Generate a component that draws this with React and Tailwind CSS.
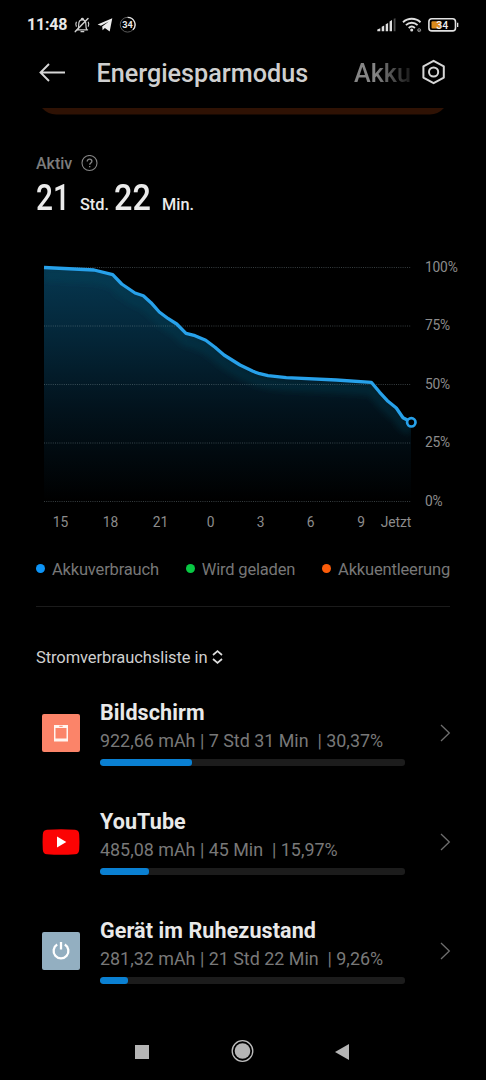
const GRID = [
  { label: "100%", y: 17.5 },
  { label: "75%", y: 76 },
  { label: "50%", y: 134.5 },
  { label: "25%", y: 193 },
  { label: "0%", y: 251.5 },
];

const HOURS = [
  { label: "15", x: 60.5 },
  { label: "18", x: 110.5 },
  { label: "21", x: 160.5 },
  { label: "0", x: 210.5 },
  { label: "3", x: 260.5 },
  { label: "6", x: 310.5 },
  { label: "9", x: 361 },
  { label: "Jetzt", x: 396 },
];

const LINE =
  "M44 17.5 L94 20 L112.7 24.7 L121.7 34 L135 43 L143.3 45.7 L151 52.7 L159.3 62 L168.3 68.7 L176.7 74 L186 83.3 L195 85.7 L205.7 90.3 L215 97.3 L224 105 L240 115 L253 121.3 L259.7 123.7 L268 125.7 L286.3 127.7 L336.3 130 L371.3 132.3 L379.7 142.3 L388 151.3 L396.3 158 L403 167.7 L411 172";

const StatusBar = () => (
  <div className="flex h-12 items-center justify-between pt-[2px] pl-[27px] pr-[26px]">
    <div className="flex items-center">
      <span className="w-[47px] text-[16px] font-bold tracking-[-0.2px] whitespace-nowrap text-[#e8e8e8]">11:48</span>
      <svg className="h-4 w-4" viewBox="0 0 16 16" fill="none" stroke="#cfcfcf" strokeWidth="1.2" strokeLinecap="round">
        <path d="M3 12.800h10.600M4 12.400c.6-1.200.7-2.400.7-4.700 0-2.800 1.200-4.800 3.600-4.800s3.600 2 3.600 4.800c0 2.300.1 3.500.8 4.900M7.300 2.300c.2-1.300 1.900-1.300 2.100 0M7 14.700h2.800" />
        <path d="M2.300 5.200c-.6 1.200-.6 2.800 0 4M14.300 5.200c.6 1.200.6 2.800 0 4" />
        <path d="M14 1.500L1.300 14.600" strokeWidth="1.500" />
      </svg>
      <svg className="ml-[7px] h-[14px] w-4" viewBox="0 0 16 14">
        <path d="M.6 6.500L15.300.3 12.700 13.600 7.900 10.100 5.600 12.300 5.200 8.400 11.800 3.600 3.900 7.800z" fill="#ececec" />
      </svg>
      <svg className="ml-[6px] h-[18px] w-[18px]" viewBox="0 0 18 18" fill="none">
        <circle cx="8.600" cy="8.700" r="7.400" stroke="#5a5a5a" strokeWidth="1" />
        <path d="M8.600 1.300A7.400 7.400 0 0 1 13.900 13.900" stroke="#e2e2e2" strokeWidth="1.300" />
        <text x="8.600" y="12" textAnchor="middle" fontSize="9.200" fontWeight="700" fill="#e8e8e8">34</text>
      </svg>
    </div>
    <div className="flex items-center">
      <svg className="h-[14px] w-[19px]" viewBox="0 0 19 14" fill="#dedede">
        <path d="M.3 11.400l3-1.200V13.200H.3zM4.700 8.800l2.500-1.400v5.800H4.700zM8.700 6.300l2.400-1.400v8.300H8.700zM12.600 3.500l2.400-1.400v11.100h-2.400z" />
        <path d="M16.700.8l1.800-.6v13h-1.800z" fill="#4d4d4d" />
      </svg>
      <svg className="ml-[6px] h-4 w-[21px]" viewBox="0 0 21 16" fill="none" stroke="#dedede" strokeWidth="1.900">
        <path d="M1 5.200c5-4.600 12.500-4.600 17.500 0M3.900 8.100c3.400-3.100 8.300-3.100 11.700 0M6.700 10.900c1.900-1.600 4.300-1.600 6.200 0" />
        <circle cx="9.700" cy="13" r="1.500" fill="#dedede" stroke="none" />
        <circle cx="17.200" cy="13.200" r="1.500" stroke="#8a8a8a" strokeWidth="1" />
        <path d="M15.700 13.300h3" stroke="#8a8a8a" strokeWidth=".8" />
      </svg>
      <svg className="ml-[5px] h-4 w-8" viewBox="0 0 32 16" fill="none">
        <rect x="0.900" y="1.700" width="26.600" height="12.200" rx="3" stroke="#e2e2e2" strokeWidth="1.600" />
        <rect x="3.500" y="4.200" width="9" height="7.400" rx="1" fill="#d98a1c" />
        <path d="M29 5.800h1.300v4.200h-1.300z" fill="#e2e2e2" />
        <text x="14.300" y="11.500" textAnchor="middle" fontSize="10.500" fontWeight="500" fill="#efefef">34</text>
      </svg>
    </div>
  </div>
);

const Header = () => (
  <header className="flex h-[60px] items-center pb-[8px] pl-[39px]">
    <svg className="mb-[2px] h-[20px] w-[27px]" viewBox="0 0 27 20" fill="none" stroke="#d6d6d6" strokeWidth="1.900">
      <path d="M26 9.500H1.500M10 1L1.500 9.500 10 18" />
    </svg>
    <h1 className="ml-[30.500px] w-[257.500px] text-[25.200px] font-medium whitespace-nowrap text-[#cfcfcf]">Energiesparmodus</h1>
    <span className="w-[56px] overflow-hidden bg-linear-to-r from-[#858585] from-40% to-[#1c1c1c] bg-clip-text text-[25.200px] font-medium whitespace-nowrap text-transparent">
      Akku
    </span>
    <svg className="mb-[4px] ml-[11px] h-[26px] w-[26px]" viewBox="0 0 26 26" fill="none" stroke="#d6d6d6" strokeWidth="2" strokeLinejoin="round">
      <path d="M12.600 1.800L22.800 7.400V18.600L12.600 24.200 2.400 18.600V7.400z" />
      <circle cx="12.600" cy="13" r="4.600" />
    </svg>
  </header>
);

const ActiveTime = () => (
  <section className="px-9 pt-[36px]">
    <div className="flex h-6 items-center">
      <span className="w-[45px] pt-[2px] text-[16px] font-medium text-[#7c7c7c]">Aktiv</span>
      <svg className="h-[17px] w-[17px]" viewBox="0 0 17 17" fill="none" stroke="#858585" strokeWidth="1.100">
        <circle cx="8.500" cy="8" r="7.500" />
        <path d="M6.200 6.500c0-3.200 4.700-3 4.700-.2 0 1.700-2.200 1.800-2.200 3.500M8.700 10.900v1.300" strokeWidth="1.300" />
      </svg>
    </div>
    <div className="flex h-11 items-baseline whitespace-nowrap text-[#ebebeb]">
      <span className="w-[44px] origin-left scale-x-[0.83] text-[36px] leading-[46px] font-medium">21</span>
      <span className="w-[34px] text-[16.300px] font-medium">Std.</span>
      <span className="w-[48px] origin-left scale-x-[0.9] text-[36px] leading-[46px] font-medium">22</span>
      <span className="text-[16.300px] font-medium">Min.</span>
    </div>
  </section>
);

const BatteryChart = () => (
  <svg className="mt-[31px] block h-[290px] w-[486px]" viewBox="0 0 486 290" fill="none">
    <defs>
      <linearGradient id="area" x1="0" y1="17" x2="0" y2="251" gradientUnits="userSpaceOnUse">
        <stop offset="0" stopColor="#063750" />
        <stop offset="0.300" stopColor="#042638" />
        <stop offset="0.600" stopColor="#02131d" />
        <stop offset="1" stopColor="#000000" />
      </linearGradient>
      <filter id="soft" x="-10%" y="-10%" width="120%" height="130%">
        <feGaussianBlur stdDeviation="3" />
      </filter>
      <clipPath id="under">
        <path d={`${LINE} V251.500 H44z`} />
      </clipPath>
    </defs>
    <path d={`${LINE} V251.500 H44z`} fill="url(#area)" />
    <g clipPath="url(#under)">
      <path d={LINE} stroke="#0a4a5c" strokeOpacity="0.280" strokeWidth="10" transform="translate(0 8)" filter="url(#soft)" />
    </g>
    {GRID.map((g) => (
      <g key={g.label}>
        <path d={`M44 ${g.y}H411`} stroke="#8a9ba0" strokeOpacity="0.400" strokeWidth="1" strokeDasharray="1 1.200" />
        <text x="425" y={g.y + 4.300} fontSize="13.800" letterSpacing="-0.200" fill="#8c8c8c">{g.label}</text>
      </g>
    ))}
    <path d={LINE} stroke="#27a1ea" strokeWidth="3.300" strokeLinejoin="round" />
    <circle cx="411.300" cy="172.300" r="4.200" fill="#000" stroke="#27a1ea" strokeWidth="2.700" />
    {HOURS.map((h) => (
      <text key={h.label} x={h.x} y="276.500" textAnchor="middle" fontSize="13.800" letterSpacing="-0.100" fill="#8c8c8c">{h.label}</text>
    ))}
  </svg>
);

const Legend = () => (
  <div className="mx-9 flex h-[67px] items-center justify-between border-b border-[#1b1b1b] pb-[6px] text-[16.500px] tracking-[-0.180px] whitespace-nowrap text-[#777]">
    <div className="flex items-center gap-[7px]">
      <i className="mb-[4px] h-[9px] w-[9px] rounded-full bg-[#0d94f7]" />
      Akkuverbrauch
    </div>
    <div className="flex items-center gap-[7px]">
      <i className="mb-[4px] h-[9px] w-[9px] rounded-full bg-[#08c843]" />
      Wird geladen
    </div>
    <div className="flex items-center gap-[7px]">
      <i className="mb-[4px] h-[9px] w-[9px] rounded-full bg-[#fc5c0a]" />
      Akkuentleerung
    </div>
  </div>
);

const ScreenIcon = () => (
  <svg className="h-[38px] w-[38px]" viewBox="0 0 38 38">
    <rect width="38" height="38" rx="2" fill="#fb8469" />
    <path d="M12 11h14v16.500H12zM13.500 14v10.500h11V14z" fill="#fff4ef" fillRule="evenodd" />
    <path d="M17.300 12.300h3.400" stroke="#fb8469" strokeWidth="1" />
  </svg>
);

const YouTubeIcon = () => (
  <svg className="h-[38px] w-[38px]" viewBox="0 0 38 38">
    <path d="M5 6.700Q19 5.600 33 6.700Q37 7 37.200 11.500Q37.700 19 37.200 26.500Q37 31 33 31.300Q19 32.400 5 31.300Q1 31 .8 26.500Q.3 19 .8 11.500Q1 7 5 6.700z" fill="#fb0303" />
    <path d="M15 13.600v10.800l9.300-5.400z" fill="#fff" />
  </svg>
);

const IdleIcon = () => (
  <svg className="h-[38px] w-[38px]" viewBox="0 0 38 38" fill="none" stroke="#fff" strokeWidth="2.300">
    <rect width="38" height="38" rx="2" fill="#93afc1" stroke="none" />
    <path d="M15.200 12.600a7.400 7.400 0 1 0 7.600 0M19 10v7.600" />
  </svg>
);

const APPS = [
  { name: "Bildschirm", usage: "922,66 mAh | 7 Std 31 Min  | 30,37%", bar: 30.1, icon: <ScreenIcon /> },
  { name: "YouTube", usage: "485,08 mAh | 45 Min  | 15,97%", bar: 16.1, icon: <YouTubeIcon /> },
  { name: "Gerät im Ruhezustand", usage: "281,32 mAh | 21 Std 22 Min  | 9,26%", bar: 9.1, icon: <IdleIcon /> },
];

const AppRow = ({ app }) => (
  <li className="flex h-[109px] items-center pl-[42px]">
    {app.icon}
    <div className="ml-5 h-full w-[305px] pt-[21px] whitespace-pre">
      <p className="text-[21.500px] leading-7 font-bold tracking-[0.1px] text-[#e9e9e9]">{app.name}</p>
      <p className="text-[17.900px] leading-7 text-[#787878]">{app.usage}</p>
      <div className="mt-1 h-[7px] overflow-hidden rounded-[3px] bg-[#1c1c1c]">
        <div className="h-full rounded-[3px] bg-[#0a80d2]" style={{ width: `${app.bar}%` }} />
      </div>
    </div>
    <svg className="ml-[35px] h-[18px] w-[11px]" viewBox="0 0 11 18" fill="none" stroke="#6e6e6e" strokeWidth="1.300">
      <path d="M1 1l8.300 8L1 17" />
    </svg>
  </li>
);

const NavBar = () => (
  <nav className="flex h-[60px] items-center justify-between px-[135px]">
    <div className="mt-[2px] h-[14px] w-[14px] bg-[#b5b5b5]" />
    <svg className="h-6 w-6" viewBox="0 0 24 24">
      <circle cx="12.500" cy="12" r="10.300" fill="none" stroke="#bdbdbd" strokeWidth="1.300" />
      <circle cx="12.500" cy="12" r="7.800" fill="#b5b5b5" />
    </svg>
    <svg className="mt-[2px] h-4 w-4" viewBox="0 0 16 16">
      <path d="M14 0v16L-.2 8z" fill="#b5b5b5" />
    </svg>
  </nav>
);

const App = () => {
  return (
    <div className="h-[1080px] w-[486px] overflow-hidden bg-black font-['Roboto',sans-serif]">
      <StatusBar />
      <Header />
      {/* bottom edge of the card scrolled under the header */}
      <svg className="block h-[7px] w-[486px]" viewBox="0 0 486 7">
        <path d="M42 0H444Q438 6.500 430 6.500H56Q48 6.500 42 0z" fill="#2f1204" />
      </svg>
      <ActiveTime />
      <BatteryChart />
      <Legend />
      <div className="flex h-[71px] items-end px-9 pb-[8px]">
        <div className="flex h-6 items-center text-[16.500px] tracking-[-0.090px] whitespace-nowrap text-[#cfcfcf]">
          Stromverbrauchsliste in
          <svg className="mb-[2px] ml-[5px] h-[14px] w-[11px]" viewBox="0 0 11 14" fill="none" stroke="#dedede" strokeWidth="1.700">
            <path d="M1 5L5.500 1.200 10 5M1 9l4.500 3.800L10 9" />
          </svg>
        </div>
      </div>
      <ul>
        {APPS.map((app) => (
          <AppRow key={app.name} app={app} />
        ))}
      </ul>
      <div className="h-[16px]" />
      <NavBar />
    </div>
  );
};

export default App;
